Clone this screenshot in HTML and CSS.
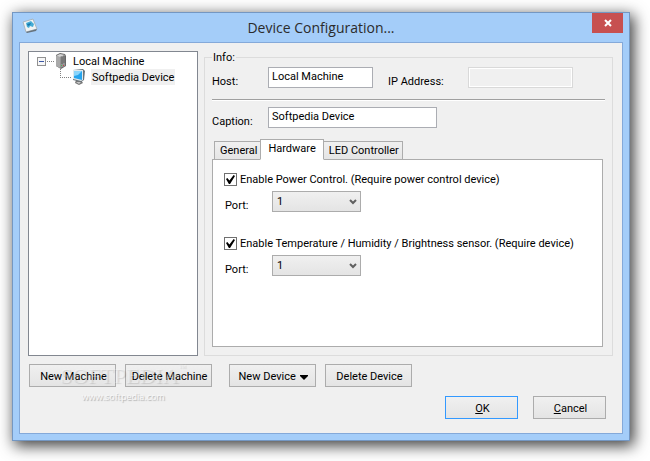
FILE: index.html
```html
<!DOCTYPE html>
<html lang="en">
<head>
  <meta charset="UTF-8">
  <meta name="viewport" content="width=device-width, initial-scale=1.0">
  <title>Device Configuration</title>
  <link rel="stylesheet" href="styles.css">
</head>
<body>
  <div class="window">
    <header class="titlebar">
      <svg class="app-icon" width="16" height="16" viewBox="0 0 16 16">
        <path d="M1 4 L11 1 L15 11 L4 14 Z" fill="#f1f3f4" stroke="#a9b5be"/>
        <path d="M4 14 L15 11 L14 13 L5 15 Z" fill="#66727c"/>
        <path d="M4 5 L9 3 L12 6 L11 9 L8 8 L7 10 L5 9 Z" fill="#45acd6"/>
        <path d="M5 6 L9 5 L8 7 L6 8 Z" fill="#1676a8"/>
      </svg>
      <h1>Device Configuration...</h1>
      <button class="close" aria-label="Close">
        <svg width="8" height="8" viewBox="0 0 8 8"><path d="M1 1 L7 7 M7 1 L1 7" stroke="#fff" stroke-width="2"/></svg>
      </button>
    </header>

    <main class="client">
      <div class="panes">
        <ul class="tree">
          <li>
            <div class="node">
              <svg class="guide" width="18" height="16" viewBox="0 0 18 16" shape-rendering="crispEdges">
                <rect x="0.5" y="4.5" width="8" height="8" fill="#f7f7f7" stroke="#919191"/>
                <path d="M2 8.5 H7" stroke="#3b57a5"/>
                <path d="M10 8.5 H17" stroke="#808080" stroke-dasharray="1 1"/>
              </svg>
              <svg width="12" height="16" viewBox="0 0 12 16">
                <path d="M1 2 L5 0 L10 1 L11 3 L11 13 L6 16 L1 13 Z" fill="#686868"/>
                <path d="M1 3 L5 4 L5 15 L1 13 Z" fill="#a9a9a9"/>
                <path d="M1 3 L5 1 L10 2 L5 4 Z" fill="#d5d5d5"/>
                <path d="M5 4 L10 2 L10 13 L5 15 Z" fill="#959595"/>
                <path d="M7 4 V11 M9 3 V10" stroke="#5d5d5d"/>
                <path d="M6 12 H7 V13 H6 Z" fill="#4bb04b"/>
                <path d="M8 12 H9 V13 H8 Z" fill="#c44"/>
              </svg>
              <span class="name">Local Machine</span>
            </div>
            <ul>
              <li>
                <div class="node child">
                  <svg class="guide" width="12" height="16" viewBox="0 0 12 16" shape-rendering="crispEdges">
                    <path d="M0.5 0 V9" stroke="#808080" stroke-dasharray="1 1"/>
                    <path d="M2 8.5 H12" stroke="#808080" stroke-dasharray="1 1"/>
                  </svg>
                  <svg width="14" height="16" viewBox="0 0 14 16">
                    <path d="M4 11 H9 L11 14 L7 16 L3 14 Z" fill="#777"/>
                    <path d="M4 13 L9 13 L7 15 Z" fill="#c8c8c8"/>
                    <path d="M1 1 L11 0 L13 2 L12 11 L9 13 L1 11 Z" fill="#69747b"/>
                    <path d="M1 1 L11 1 L11 11 L9 12 L1 10 Z" fill="#dfe8ec"/>
                    <path d="M2 2 L10 2 L10 11 L2 9 Z" fill="#27a5ee"/>
                    <path d="M2 2 L10 2 L6 6 L2 7 Z" fill="#8ad5fb"/>
                  </svg>
                  <span class="name selected">Softpedia Device</span>
                </div>
              </li>
            </ul>
          </li>
        </ul>

        <fieldset class="info">
          <legend>Info:</legend>
          <div class="row">
            <label class="field-label" for="host">Host:</label>
            <input class="text short" id="host" type="text" value="Local Machine">
            <label class="ip-label" for="ip">IP Address:</label>
            <input class="text short" id="ip" type="text" disabled>
          </div>
          <hr>
          <div class="row">
            <label class="field-label" for="caption">Caption:</label>
            <input class="text long" id="caption" type="text" value="Softpedia Device">
          </div>

          <div class="tabs" role="tablist">
            <button class="tab" role="tab">General</button>
            <button class="tab active" role="tab" aria-selected="true">Hardware</button>
            <button class="tab" role="tab">LED Controller</button>
          </div>
          <div class="panel" role="tabpanel">
            <div class="option">
              <label class="check"><input type="checkbox" checked>Enable Power Control. (Require power control device)</label>
              <div class="row">
                <label class="port-label" for="power-port">Port:</label>
                <div class="select">
                  <select id="power-port"><option>1</option><option>2</option></select>
                  <svg width="8" height="6" viewBox="0 0 8 6"><path d="M1 1 L4 4 L7 1" fill="none" stroke="#606060" stroke-width="2"/></svg>
                </div>
              </div>
            </div>
            <div class="option">
              <label class="check"><input type="checkbox" checked>Enable Temperature / Humidity / Brightness sensor. (Require device)</label>
              <div class="row">
                <label class="port-label" for="sensor-port">Port:</label>
                <div class="select">
                  <select id="sensor-port"><option>1</option><option>2</option></select>
                  <svg width="8" height="6" viewBox="0 0 8 6"><path d="M1 1 L4 4 L7 1" fill="none" stroke="#606060" stroke-width="2"/></svg>
                </div>
              </div>
            </div>
          </div>
        </fieldset>
      </div>

      <div class="actions">
        <button class="btn">New Machine</button>
        <button class="btn">Delete Machine</button>
        <button class="btn group-start">New Device
          <svg width="8" height="5" viewBox="0 0 8 5"><path d="M0 0 H8 V1 L4 5 L0 1 Z"/></svg>
        </button>
        <button class="btn">Delete Device</button>
        <div class="watermark">
          <div class="brand">SOFTPEDIA<sup>™</sup></div>
          <div class="site">www.softpedia.com</div>
        </div>
      </div>

      <div class="confirm">
        <button class="btn small default"><u>O</u>K</button>
        <button class="btn small"><u>C</u>ancel</button>
      </div>
    </main>
  </div>
</body>
</html>
```
FILE: styles.css
```css
* {
  box-sizing: border-box;
}

body {
  margin: 0;
  padding: 12px 20px 20px 12px;
  min-height: 100vh;
  display: flex;
  background: #fff;
  color: #000;
  font-family: Roboto, "Liberation Sans", sans-serif;
  font-size: 11px;
  line-height: 13px;
}

button, input, select {
  margin: 0;
  color: inherit;
  font: inherit;
}

.window {
  flex: 1;
  min-width: 0;
  display: flex;
  flex-direction: column;
  padding: 0 6px 6px;
  background: #a4cdf9;
  border: 1px solid #7497c2;
  box-shadow: 3px 4px 14px 1px rgba(0, 0, 0, 0.75);
}

/* Title bar */
.titlebar {
  position: relative;
  display: flex;
  align-items: center;
  height: 29px;
}

.app-icon {
  margin: 0 0 3px 3px;
}

.titlebar h1 {
  flex: 1;
  margin: 0 19px 0 0;
  color: #2b2b2b;
  font-family: "Open Sans", "Noto Sans", sans-serif;
  font-size: 14px;
  font-weight: 400;
  line-height: 20px;
  text-align: center;
}

.close {
  position: absolute;
  top: 0;
  right: 0;
  width: 31px;
  height: 20px;
  display: flex;
  align-items: center;
  justify-content: center;
  padding: 0;
  background: #c75050;
  border: none;
}

.client {
  flex: 1;
  display: flex;
  flex-direction: column;
  padding: 8px 9px 14px 8px;
  background: #f0f0f0;
  border: 1px solid #84a9d9;
}

.panes {
  flex: 1;
  display: grid;
  grid-template-columns: 170px 1fr;
  gap: 6px;
}

/* Machine tree */
.tree {
  margin: 0;
  padding: 1px 8px;
  background: #fff;
  border: 1px solid #828790;
}

.tree, .tree ul {
  list-style: none;
}

.tree ul {
  margin: 0;
  padding: 0;
}

.node {
  display: flex;
  height: 16px;
  line-height: 17px;
}

.node.child {
  padding-left: 23px;
}

.name {
  margin-left: 5px;
  padding: 0 1px;
}

.name.selected {
  background: #f0f0f0;
}

/* Info group */
.info {
  display: flex;
  flex-direction: column;
  min-width: 0;
  margin: 0;
  padding: 3px 7px 8px;
  border: 1px solid #dcdcdc;
}

.info legend {
  padding: 0 1px;
}

.info hr {
  width: 100%;
  margin: 11px 0 6px;
  border: none;
  border-top: 1px solid #a0a0a0;
  border-bottom: 1px solid #fff;
}

.row {
  display: flex;
  align-items: flex-end;
}

.field-label {
  width: 56px;
}

.ip-label {
  width: 80px;
  margin-left: 15px;
}

.text {
  height: 21px;
  padding: 0 3px 2px;
  background: #fff;
  border: 1px solid #abadb3;
}

.text.short {
  width: 105px;
}

.text.long {
  width: 169px;
}

.text:disabled {
  background: #f0f0f0;
  border-color: #d9d9d9;
  box-shadow: inset 0 0 0 1px #fff;
}

/* Tabs */
.tabs {
  display: flex;
  align-items: flex-end;
  height: 21px;
  margin: 11px 0 -1px 2px;
}

.tab {
  height: 19px;
  padding: 0 3px 0 5px;
  background: linear-gradient(#f0f0f0, #e5e5e5);
  border: 1px solid #acacac;
}

.tab.active {
  height: 21px;
  margin: 0 -1px;
  padding: 0 7px 2px;
  background: #fff;
  border-bottom-color: #fff;
  z-index: 1;
}

.panel {
  flex: 1;
  display: flex;
  flex-direction: column;
  gap: 25px;
  margin-right: 2px;
  padding: 13px 11px;
  background: #fff;
  border: 1px solid #acacac;
}

.check {
  display: flex;
  align-items: center;
  gap: 3px;
  height: 13px;
  margin-bottom: 5px;
}

.check input {
  appearance: none;
  width: 13px;
  height: 13px;
  background: #fff;
  border: 1px solid #707070;
}

.check input:checked::before {
  content: "";
  display: block;
  width: 9px;
  height: 9px;
  margin: 1px;
  background: #000;
  clip-path: polygon(0 45%, 15% 33%, 38% 60%, 85% 0, 100% 12%, 45% 100%, 32% 100%);
}

.port-label {
  width: 48px;
  padding-left: 1px;
}

.select {
  position: relative;
}

.select select {
  display: block;
  appearance: none;
  width: 89px;
  height: 21px;
  padding: 0 4px;
  background: linear-gradient(#f0f0f0, #e4e4e4);
  border: 1px solid #acacac;
  border-radius: 0;
}

.select svg {
  position: absolute;
  top: 8px;
  right: 4px;
  pointer-events: none;
}

/* Buttons */
.actions {
  position: relative;
  display: flex;
  gap: 9px;
  margin: 8px 0 0 1px;
}

.btn {
  width: 87px;
  height: 23px;
  padding: 1px 0 0 2px;
  background: linear-gradient(#f0f0f0, #e4e4e4);
  border: 1px solid #acacac;
  white-space: nowrap;
}

.btn.group-start {
  margin-left: 8px;
}

.btn svg {
  margin-left: 2px;
}

.btn.small {
  width: 73px;
}

.btn.default {
  border-color: #3399ff;
}

.confirm {
  display: flex;
  justify-content: flex-end;
  gap: 15px;
  margin: 9px 7px 0 0;
}

.watermark {
  position: absolute;
  top: 0;
  left: 31px;
  color: rgba(255, 255, 255, 0.3);
  font-family: "Liberation Serif", serif;
  text-align: center;
  text-shadow: 1px 1px 1px rgba(0, 0, 0, 0.12);
  pointer-events: none;
}

.brand {
  font-size: 22px;
  line-height: 24px;
}

.brand sup {
  font-size: 8px;
  line-height: 8px;
  vertical-align: top;
}

.site {
  color: #f8f8f8;
  font-family: "Open Sans", sans-serif;
  font-size: 9px;
  line-height: 18px;
  text-shadow: 1px 1px 1px #aaa;
}
```
